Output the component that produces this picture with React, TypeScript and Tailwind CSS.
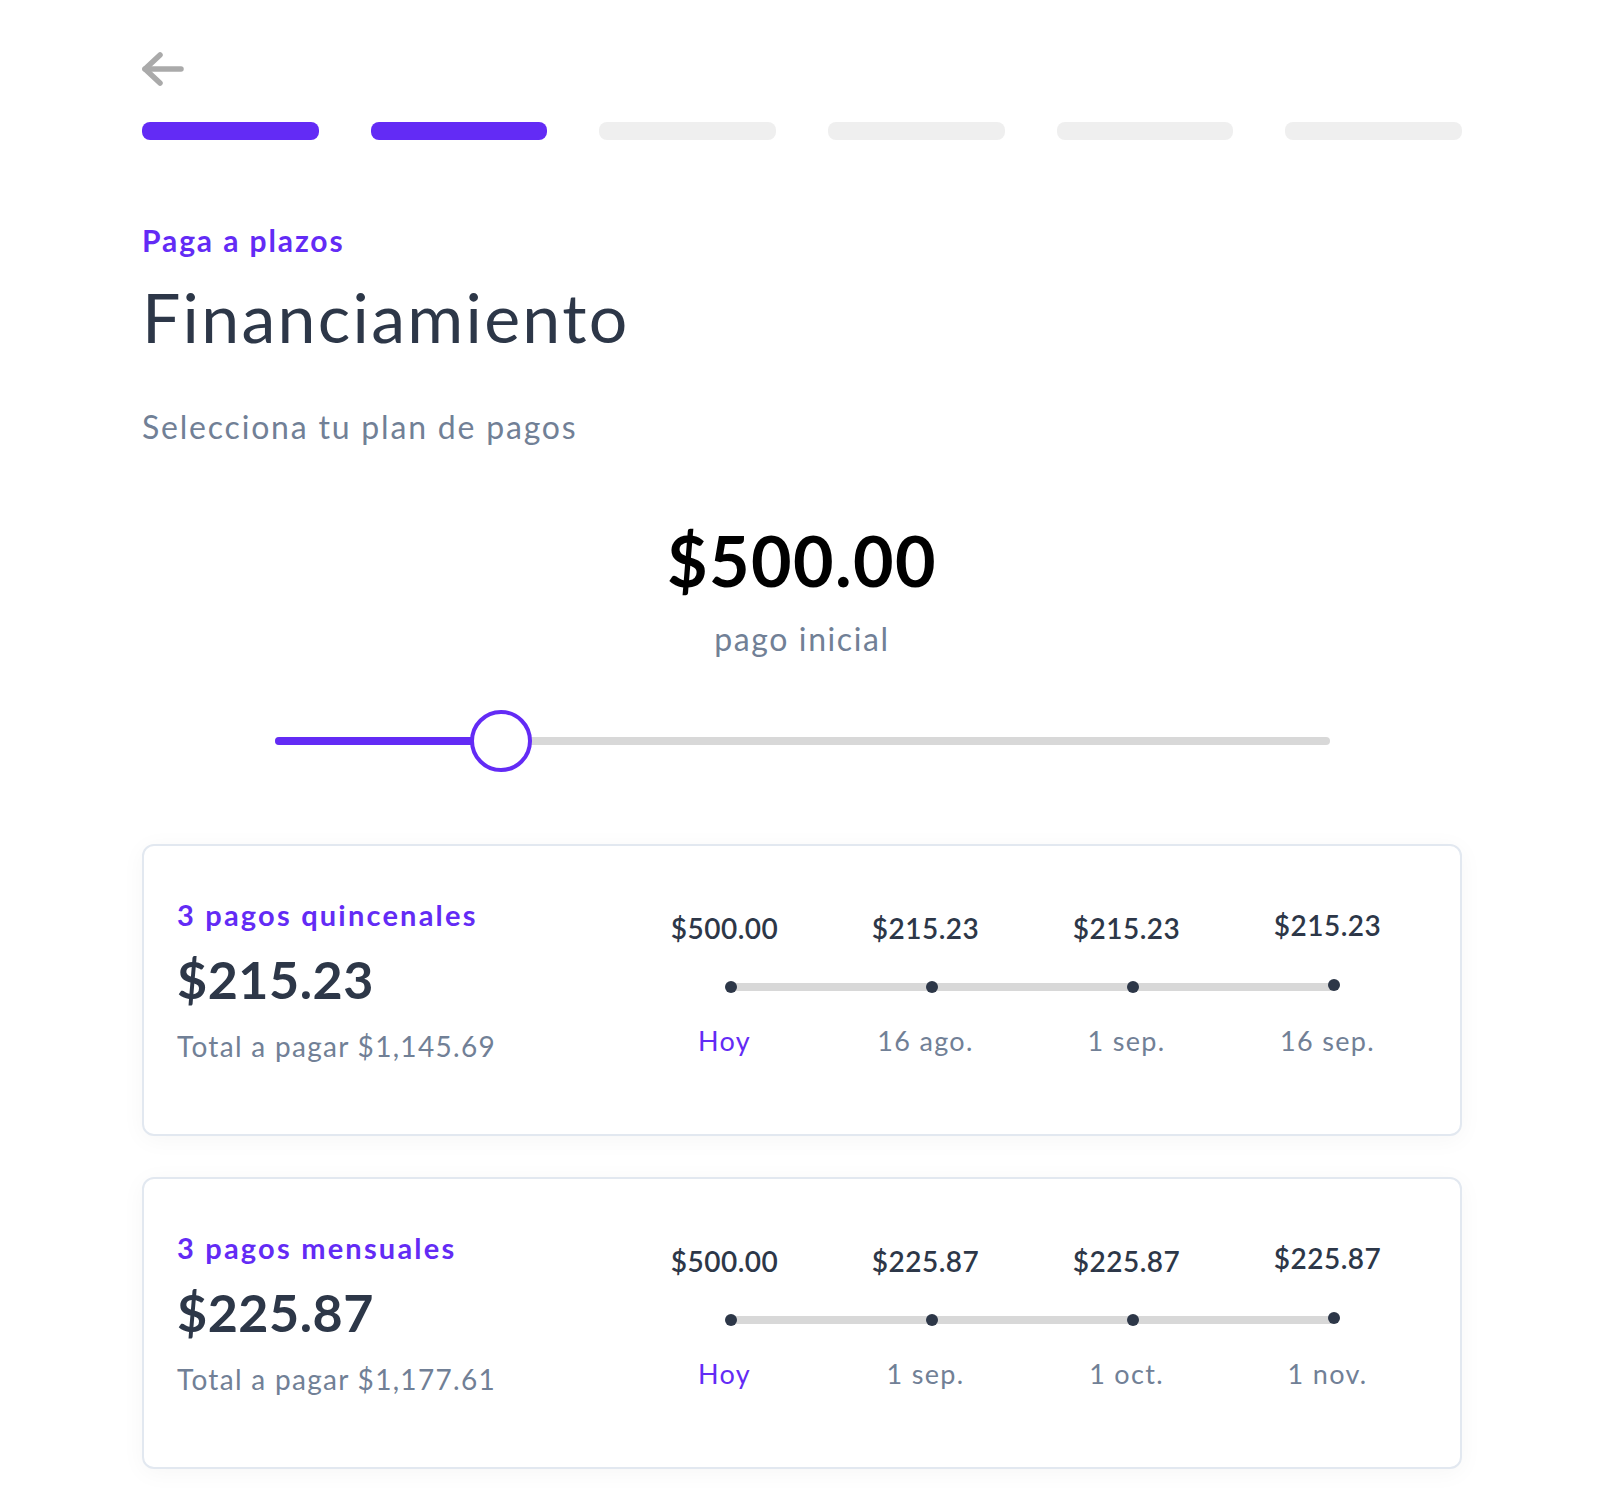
import React from "react";

const purple = "text-[#632bf5]";

interface Installment {
    amount: string;
    date: string;
}

interface PlanCardProps {
    title: string;
    amount: string;
    total: string;
    installments: Installment[];
}

const BackArrow = () => (
    <svg width="42" height="36" viewBox="0 0 42 36" fill="none" className="block">
        <path d="M18 3 L3 17 L18 31" stroke="#aaaaaa" strokeWidth="5.5" strokeLinecap="round" strokeLinejoin="round" />
        <path d="M3 17 H39" stroke="#aaaaaa" strokeWidth="5.5" strokeLinecap="round" />
    </svg>
);

const PlanCard = (props: PlanCardProps) => {
    return (
        <div className="flex h-[292px] w-full rounded-[12px] border-2 border-[#e2e8f0] bg-white px-[33px] shadow-[0_4px_24px_rgba(0,0,0,0.04)]">
            <div className="flex w-[447px] shrink-0 flex-col pt-[51px]">
                <div className={`text-[29px] leading-[36px] font-bold tracking-[2.2px] ${purple}`}>{props.title}</div>
                <div className="mt-[16px] text-[52px] leading-[60px] font-bold tracking-[0.5px] text-[#2d3748]">{props.amount}</div>
                <div className="mt-[19px] text-[28px] leading-[36px] tracking-[1.3px] text-[#718096]">{props.total}</div>
            </div>
            <div className="flex w-[804px] shrink-0 flex-col pt-[64px]">
                <div className="grid grid-cols-4">
                    {props.installments.map((e, i) => (
                        <div
                            key={i}
                            className={`text-center text-[28px] leading-[36px] font-semibold tracking-[0.5px] text-[#2d3748] ${i === 3 ? "-translate-y-[3px]" : ""}`}
                        >
                            {e.amount}
                        </div>
                    ))}
                </div>
                <div className="relative mt-[35px] grid h-[12px] grid-cols-4">
                    <div className="absolute top-[2px] right-[94px] left-[106px] h-[8px] bg-[#d8d8d8]" />
                    {props.installments.map((_, i) => (
                        <div key={i} className="relative flex justify-center">
                            <div
                                className={`h-[12px] w-[12px] translate-x-[6px] rounded-full bg-[#2d3748] ${i === 3 ? "-translate-y-[2px]" : ""}`}
                            />
                        </div>
                    ))}
                </div>
                <div className="mt-[30px] grid grid-cols-4">
                    {props.installments.map((e, i) => (
                        <div
                            key={i}
                            className={`text-center text-[27px] leading-[36px] tracking-[1.3px] ${i === 0 ? purple : "text-[#718096]"}`}
                        >
                            {e.date}
                        </div>
                    ))}
                </div>
            </div>
        </div>
    );
};

const App = () => {
    const steps = [true, true, false, false, false, false];
    return (
        <div className="min-h-screen bg-white pb-[36px]" style={{ fontFamily: "Lato, 'Noto Sans', sans-serif" }}>
            <div className="ml-[142px] w-[1320px] pt-[52px]">
                <BackArrow />
                <div className="mt-[34px] flex gap-[52px]">
                    {steps.map((active, i) => (
                        <div
                            key={i}
                            className={`h-[18px] flex-1 rounded-[8px] ${active ? "bg-[#632bf5]" : "bg-[#efefef]"}`}
                        />
                    ))}
                </div>

                <div className={`mt-[82px] text-[30px] leading-[36px] font-bold tracking-[1.9px] ${purple}`}>Paga a plazos</div>
                <h1 className="mt-[19px] text-[68px] leading-[80px] font-normal tracking-[2.3px] text-[#2d3748]">Financiamiento</h1>
                <p className="mt-[50px] text-[32px] leading-[40px] tracking-[1.8px] text-[#718096]">Selecciona tu plan de pagos</p>

                <div className="mt-[73px] text-center text-[70px] leading-[80px] font-bold tracking-[1.4px] text-black">$500.00</div>
                <div className="mt-[19px] text-center text-[32px] leading-[40px] tracking-[1.6px] text-[#718096]">pago inicial</div>

                <div className="mx-auto mt-[51px] flex h-[62px] w-[1055px] items-center">
                    <div className="relative h-[8px] w-full rounded-full bg-[#d8d8d8]">
                        <div className="h-[8px] w-[200px] rounded-l-full bg-[#632bf5]" />
                        <div className="absolute top-[-27px] left-[195px] h-[62px] w-[62px] rounded-full border-4 border-[#632bf5] bg-white" />
                    </div>
                </div>

                <div className="mt-[72px] flex flex-col gap-[41px]">
                    <PlanCard
                        title="3 pagos quincenales"
                        amount="$215.23"
                        total="Total a pagar $1,145.69"
                        installments={[
                            { amount: "$500.00", date: "Hoy" },
                            { amount: "$215.23", date: "16 ago." },
                            { amount: "$215.23", date: "1 sep." },
                            { amount: "$215.23", date: "16 sep." },
                        ]}
                    />
                    <PlanCard
                        title="3 pagos mensuales"
                        amount="$225.87"
                        total="Total a pagar $1,177.61"
                        installments={[
                            { amount: "$500.00", date: "Hoy" },
                            { amount: "$225.87", date: "1 sep." },
                            { amount: "$225.87", date: "1 oct." },
                            { amount: "$225.87", date: "1 nov." },
                        ]}
                    />
                </div>
            </div>
        </div>
    );
};

export default App;
